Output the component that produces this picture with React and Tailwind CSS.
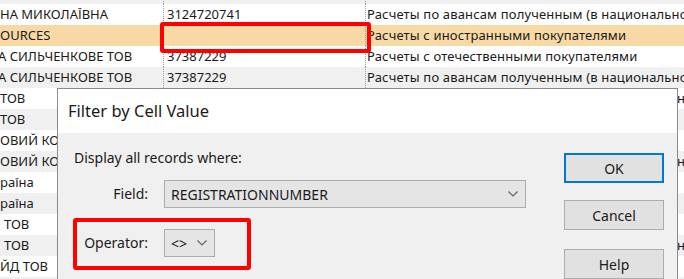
import React from "react";

const rows = [
  { c1: "", c2: "", c3: "", bg: "bg-[#f0f0f0]" },
  { c1: "НА МИКОЛАЇВНА", c2: "3124720741", c3: "Расчеты по авансам полученным (в национальной валюте)", bg: "bg-white" },
  { c1: "OURCES", c2: "", c3: "Расчеты с иностранными покупателями", bg: "bg-[#f8d9a5]" },
  { c1: "А СИЛЬЧЕНКОВЕ ТОВ", c2: "37387229", c3: "Расчеты с отечественными покупателями", bg: "bg-white", shift: true },
  { c1: "А СИЛЬЧЕНКОВЕ ТОВ", c2: "37387229", c3: "Расчеты по авансам полученным (в национальной валюте)", bg: "bg-[#f0f0f0]", shift: true },
  { c1: "ТОВ", frag: "н", bg: "bg-white", under: true },
  { c1: "ТОВ", frag: "", bg: "bg-[#f0f0f0]", under: true },
  { c1: "ОВИЙ КОМ", frag: "", bg: "bg-white", under: true },
  { c1: "ОВИЙ КОМ", frag: "н", bg: "bg-[#f0f0f0]", under: true },
  { c1: "раїна", frag: "", bg: "bg-white", under: true },
  { c1: "раїна", frag: "", bg: "bg-[#f0f0f0]", under: true },
  { c1: "ТОВ", frag: "", bg: "bg-white", under: true, pad: true },
  { c1: "ТОВ", frag: "н", bg: "bg-[#f0f0f0]", under: true, pad: true },
  { c1: "ЙД ТОВ", frag: "", bg: "bg-white", under: true },
  { c1: "", frag: "", bg: "bg-[#f0f0f0]", under: true },
];

function Chevron() {
  return (
    <svg width="10" height="6" viewBox="0 0 10 6" fill="none">
      <path d="M0.5 0.5 L5 5 L9.5 0.5" stroke="#606060" strokeWidth="1.1" />
    </svg>
  );
}

function GridRow({ r }) {
  if (r.under) {
    return (
      <div className={`flex h-[21px] shrink-0 items-center text-[13px] leading-[21px] ${r.bg}`}>
        <div className="w-[57px] shrink-0 overflow-hidden whitespace-nowrap">
          <span className={r.pad ? "inline-block pl-[4px]" : "inline-block"}>{r.c1}</span>
        </div>
        <div className="flex-1" />
        <div className="w-[6px] shrink-0 overflow-hidden whitespace-nowrap">
          <span className="inline-block -ml-[1px]">{r.frag}</span>
        </div>
      </div>
    );
  }
  return (
    <div className={`flex h-[21px] shrink-0 items-center text-[13px] leading-[21px] ${r.bg}`}>
      <div className="w-[163px] shrink-0 overflow-hidden whitespace-nowrap">
        <span className={r.shift ? "-ml-[2px] inline-block" : "inline-block"}>{r.c1}</span>
      </div>
      <div className="h-full w-px shrink-0 border-l border-dotted border-[#a0a0a0]" />
      <div className="w-[201px] shrink-0 overflow-hidden whitespace-nowrap pl-[3px]">{r.c2}</div>
      <div className="h-full w-px shrink-0 border-l border-dotted border-[#a0a0a0]" />
      <div className="flex-1 overflow-hidden whitespace-nowrap pl-[1px] tracking-[0.15px]">{r.c3}</div>
    </div>
  );
}

export default function App() {
  return (
    <div
      className="relative w-[684px] h-[279px] overflow-hidden bg-white text-[#1a1a1a]"
      style={{ fontFamily: '"Noto Sans", "Open Sans", sans-serif' }}
    >
      {/* Background grid */}
      <div className="flex flex-col -mt-[17px]">
        {rows.map((r, i) => (
          <GridRow key={i} r={r} />
        ))}
      </div>

      {/* Highlight on empty cell */}
      <div className="absolute left-[160px] top-[22px] h-[31px] w-[211px] rounded-[3px] border-[4px] border-[#ff0000]" />

      {/* Dialog */}
      <div className="absolute left-[57px] top-[88px] w-[621px] h-[200px] border border-[#8c8c8c] bg-[#f0f0f0] flex flex-col">
        <div className="h-[44px] shrink-0 bg-white pl-[10px] flex items-center text-[16.5px] text-[#1a1a1a]">
          Filter by Cell Value
        </div>
        <div className="flex flex-1">
          <div className="flex-1 pl-[16px] pt-[15px] text-[14px]">
            <div className="leading-[20px]">Display all records where:</div>
            <div className="mt-[12px] grid grid-cols-[74px_1fr] gap-x-[16px] gap-y-[21px] items-center">
              <div className="text-right leading-[28px]">Field:</div>
              <div className="flex h-[28px] w-[362px] items-center justify-between border border-[#adadad] bg-[#e5e5e5] pl-[6px] pr-[7px]">
                <span>REGISTRATIONNUMBER</span>
                <Chevron />
              </div>
              <div className="text-right leading-[28px]">Operator:</div>
              <div className="flex h-[28px] w-[51px] items-center justify-between border border-[#adadad] bg-[#e5e5e5] pl-[6px] pr-[7px]">
                <span>&lt;&gt;</span>
                <Chevron />
              </div>
            </div>
          </div>
          <div className="mr-[13px] flex w-[100px] flex-col pt-[20px] text-[14px]">
            <button className="h-[30px] border-2 border-[#0078d7] bg-[#e1e1e1]">OK</button>
            <button className="mt-[17px] h-[30px] border border-[#adadad] bg-[#e1e1e1]">Cancel</button>
            <button className="mt-[19px] h-[30px] border border-[#adadad] bg-[#e1e1e1]">Help</button>
          </div>
        </div>
      </div>

      {/* Highlight on operator */}
      <div className="absolute left-[73px] top-[218px] h-[52px] w-[178px] rounded-[3px] border-[4px] border-[#ff0000]" />
    </div>
  );
}
